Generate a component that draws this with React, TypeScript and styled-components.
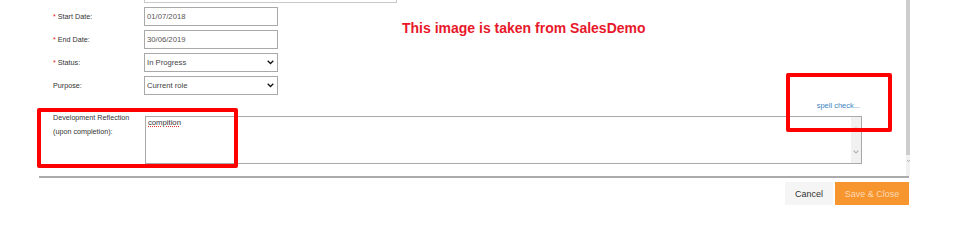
import React from "react";
import styled, { createGlobalStyle } from "styled-components";

const Global = createGlobalStyle`
  html, body { margin: 0; padding: 0; background: #fff; }
  body { font-family: "Liberation Sans", Arial, sans-serif; }
`;

const Page = styled.div`
  position: relative;
  width: 956px;
  height: 224px;
  overflow: hidden;
  display: flex;
  flex-direction: column;
  background: #fff;
`;

const ScrollArea = styled.div`
  display: flex;
  width: 910px;
  height: 176px;
  flex: none;
`;

const Form = styled.div`
  flex: 1;
  overflow: hidden;
  padding: 0 44px 0 53px;
  box-sizing: border-box;
`;

const FormInner = styled.div`
  margin-top: -16px;
  display: flex;
  flex-direction: column;
`;

const FieldRow = styled.div`
  display: grid;
  grid-template-columns: 91px auto;
  align-items: center;
  height: 19px;
  margin-bottom: 4px;
`;

const Label = styled.div`
  font-size: 7.2px;
  color: #333;
  white-space: nowrap;
`;

const Star = styled.span`
  color: #e02020;
  margin-right: 2px;
`;

const Box = styled.div<{ $w: number; $light?: boolean }>`
  box-sizing: border-box;
  width: ${(p) => p.$w}px;
  height: 19px;
  border: 1px solid ${(p) => (p.$light ? "#c9c9c9" : "#a9a9a9")};
  background: #fff;
  display: flex;
  align-items: center;
  justify-content: space-between;
  padding: 0 3px 0 2px;
  font-size: 7.7px;
  color: #555;
`;

const SelectText = styled.span`
  color: #444;
  font-size: 7.7px;
`;

const SpellRow = styled.div`
  height: 17px;
  box-sizing: border-box;
  padding-top: 2px;
  display: flex;
  justify-content: flex-end;
  padding-right: 2px;
`;

const SpellLink = styled.a`
  font-size: 7.5px;
  line-height: 10px;
  color: #3d84c0;
  text-decoration: none;
`;

const AreaRow = styled.div`
  display: grid;
  grid-template-columns: 92px auto;
  align-items: start;
`;

const AreaLabel = styled.div`
  margin-top: -5px;
  font-size: 7.2px;
  line-height: 14px;
  color: #333;
`;

const TextArea = styled.div`
  box-sizing: border-box;
  height: 48px;
  border: 1px solid #a9a9a9;
  background: #fff;
  display: grid;
  grid-template-columns: 1fr 10px;
`;

const AreaText = styled.div`
  padding: 1px 2px;
  font-size: 7.7px;
  line-height: 10px;
  color: #333;
`;

const Misspelled = styled.span`
  text-decoration: underline dotted #e03030;
  text-decoration-thickness: 1px;
  text-underline-offset: 1px;
`;

const AreaScroll = styled.div`
  background: #f1f1f1;
  display: flex;
  flex-direction: column;
  align-items: center;
  justify-content: space-between;
  padding: 9px 0 9px;
`;

const PageScrollbar = styled.div`
  width: 4px;
  display: flex;
  flex-direction: column;
`;

const Thumb = styled.div`
  height: 155px;
  background: #cdcdcd;
`;

const Track = styled.div`
  flex: 1;
  background: #f1f1f1;
  display: flex;
  justify-content: flex-end;
  padding-top: 5px;
`;

const Divider = styled.div`
  margin-left: 39px;
  width: 870px;
  height: 2px;
  background: #ababab;
`;

const ButtonRow = styled.div`
  display: flex;
  justify-content: flex-end;
  gap: 2px;
  padding-right: 47px;
  margin-top: 4px;
`;

const Button = styled.button<{ $primary?: boolean }>`
  box-sizing: border-box;
  height: 23px;
  border: none;
  margin: 0;
  padding: 0;
  width: ${(p) => (p.$primary ? "74px" : "48px")};
  background: ${(p) => (p.$primary ? "#f7952f" : "#f5f5f5")};
  color: ${(p) => (p.$primary ? "#fcd9b4" : "#333")};
  font-family: "Liberation Sans", Arial, sans-serif;
  font-size: 9px;
`;

const RedBox = styled.div<{ $x: number; $y: number; $w: number; $h: number }>`
  position: absolute;
  left: ${(p) => p.$x}px;
  top: ${(p) => p.$y}px;
  width: ${(p) => p.$w}px;
  height: ${(p) => p.$h}px;
  box-sizing: border-box;
  border: 4px solid #ff0000;
  border-radius: 2px;
  pointer-events: none;
`;

const Watermark = styled.div`
  position: absolute;
  left: 402px;
  top: 20px;
  font-family: "Liberation Sans", Arial, sans-serif;
  font-weight: 700;
  font-size: 14px;
  color: #e8182b;
  white-space: nowrap;
`;

const Chevron = ({ color = "#111", size = 7 }: { color?: string; size?: number }) => (
  <svg width={size} height={size * 0.6} viewBox="0 0 10 6">
    <path d="M1 1 L5 5 L9 1" fill="none" stroke={color} strokeWidth="1.8" />
  </svg>
);

const UpChevron = () => (
  <svg width="4" height="3" viewBox="0 0 10 6">
    <path d="M1 5 L5 1 L9 5" fill="none" stroke="#c8c8c8" strokeWidth="1.6" />
  </svg>
);

export default function App() {
  return (
    <>
      <Global />
      <Page>
        <ScrollArea>
          <Form>
            <FormInner>
              <FieldRow>
                <Label />
                <Box $w={253} $light />
              </FieldRow>
              <FieldRow>
                <Label>
                  <Star>*</Star>Start Date:
                </Label>
                <Box $w={134}>01/07/2018</Box>
              </FieldRow>
              <FieldRow>
                <Label>
                  <Star>*</Star>End Date:
                </Label>
                <Box $w={134}>30/06/2019</Box>
              </FieldRow>
              <FieldRow>
                <Label>
                  <Star>*</Star>Status:
                </Label>
                <Box $w={134}>
                  <SelectText>In Progress</SelectText>
                  <Chevron />
                </Box>
              </FieldRow>
              <FieldRow>
                <Label>Purpose:</Label>
                <Box $w={134}>
                  <SelectText>Current role</SelectText>
                  <Chevron />
                </Box>
              </FieldRow>
              <SpellRow>
                <SpellLink href="#">spell check...</SpellLink>
              </SpellRow>
              <AreaRow>
                <AreaLabel>
                  Development Reflection
                  <br />
                  (upon completion):
                </AreaLabel>
                <TextArea>
                  <AreaText>
                    <Misspelled>compition</Misspelled>
                  </AreaText>
                  <AreaScroll>
                    <UpChevron />
                    <Chevron color="#b0b0b0" size={6} />
                  </AreaScroll>
                </TextArea>
              </AreaRow>
            </FormInner>
          </Form>
          <PageScrollbar>
            <Thumb />
            <Track>
              <Chevron color="#555" size={3} />
            </Track>
          </PageScrollbar>
        </ScrollArea>
        <Divider />
        <ButtonRow>
          <Button>Cancel</Button>
          <Button $primary>Save &amp; Close</Button>
        </ButtonRow>
        <Watermark>This image is taken from SalesDemo</Watermark>
        <RedBox $x={37} $y={108} $w={201} $h={60} />
        <RedBox $x={786} $y={73} $w={106} $h={59} />
      </Page>
    </>
  );
}
